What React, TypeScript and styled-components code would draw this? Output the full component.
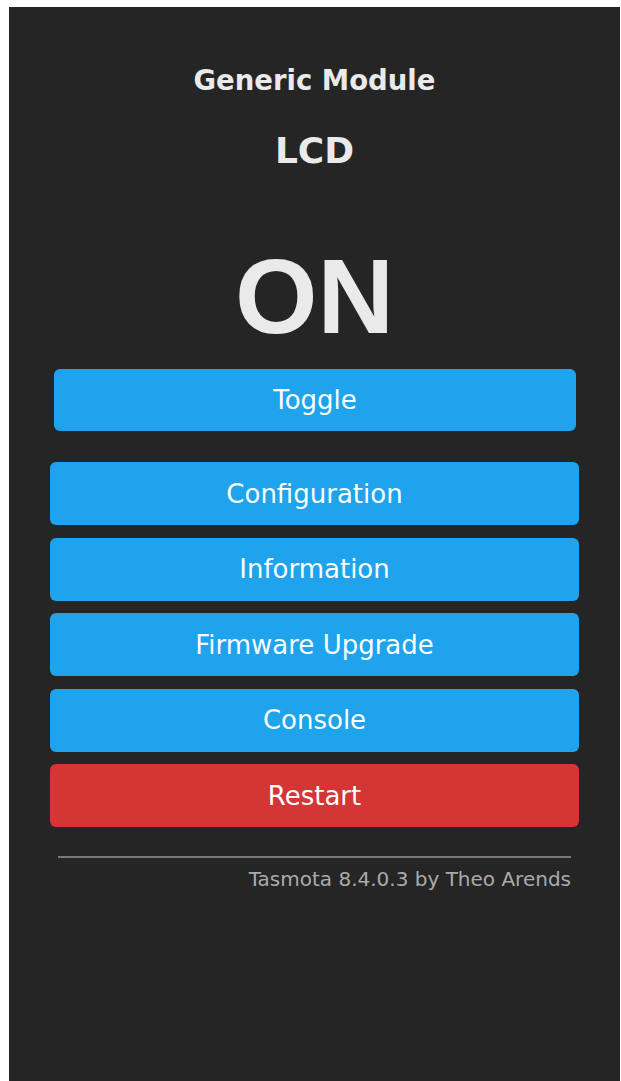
import styled, { createGlobalStyle } from "styled-components";

const GlobalStyle = createGlobalStyle`
  html, body {
    margin: 0;
    padding: 0;
    background: #ffffff;
  }
  body {
    font-family: "DejaVu Sans", Verdana, sans-serif;
  }
`;

const Screen = styled.div`
  box-sizing: border-box;
  margin: 7px 1px 0 9px;
  min-height: calc(100vh - 7px);
  background: #252525;
  color: #eaeaea;
  padding-top: 53px;
  display: flex;
  justify-content: center;
`;

const Column = styled.div`
  width: 529px;
  display: flex;
  flex-direction: column;
`;

const ModuleName = styled.h3`
  margin: 0;
  text-align: center;
  font-size: 27.5px;
  line-height: 40px;
  font-weight: bold;
`;

const DeviceName = styled.h2`
  margin: 31px 0 0;
  text-align: center;
  font-size: 36px;
  line-height: 40px;
  font-weight: bold;
`;

const PowerState = styled.div`
  margin-top: 65px;
  text-align: center;
  font-family: "Liberation Sans", Arial, sans-serif;
  font-size: 106px;
  line-height: 120px;
  font-weight: bold;
`;

const ToggleRow = styled.div`
  margin-top: 13px;
  padding: 0 3px 0 4px;
`;

const Menu = styled.div`
  margin-top: 31px;
  display: flex;
  flex-direction: column;
  gap: 12.5px;
`;

const Button = styled.button<{ $danger?: boolean; $h?: number }>`
  display: block;
  width: 100%;
  height: ${({ $h }) => $h ?? 63}px;
  border: 0;
  border-radius: 6px;
  padding: 0;
  background: ${({ $danger }) => ($danger ? "#d43535" : "#1fa3ec")};
  color: #faffff;
  font-family: "DejaVu Sans", Verdana, sans-serif;
  font-size: 26px;
  cursor: pointer;
`;

const Footer = styled.div`
  margin: 29px 8px 0;
  border-top: 2px solid #787878;
  text-align: right;
  padding-top: 9px;
`;

const Credit = styled.span`
  font-size: 20px;
  color: #aaaaaa;
`;

const menuItems = ["Configuration", "Information", "Firmware Upgrade", "Console"];

export default function App() {
  return (
    <>
      <GlobalStyle />
      <Screen>
        <Column>
          <ModuleName>Generic Module</ModuleName>
          <DeviceName>LCD</DeviceName>
          <PowerState>ON</PowerState>
          <ToggleRow>
            <Button $h={62}>Toggle</Button>
          </ToggleRow>
          <Menu>
            {menuItems.map((label) => (
              <Button key={label}>{label}</Button>
            ))}
            <Button $danger>Restart</Button>
          </Menu>
          <Footer>
            <Credit>Tasmota 8.4.0.3 by Theo Arends</Credit>
          </Footer>
        </Column>
      </Screen>
    </>
  );
}
